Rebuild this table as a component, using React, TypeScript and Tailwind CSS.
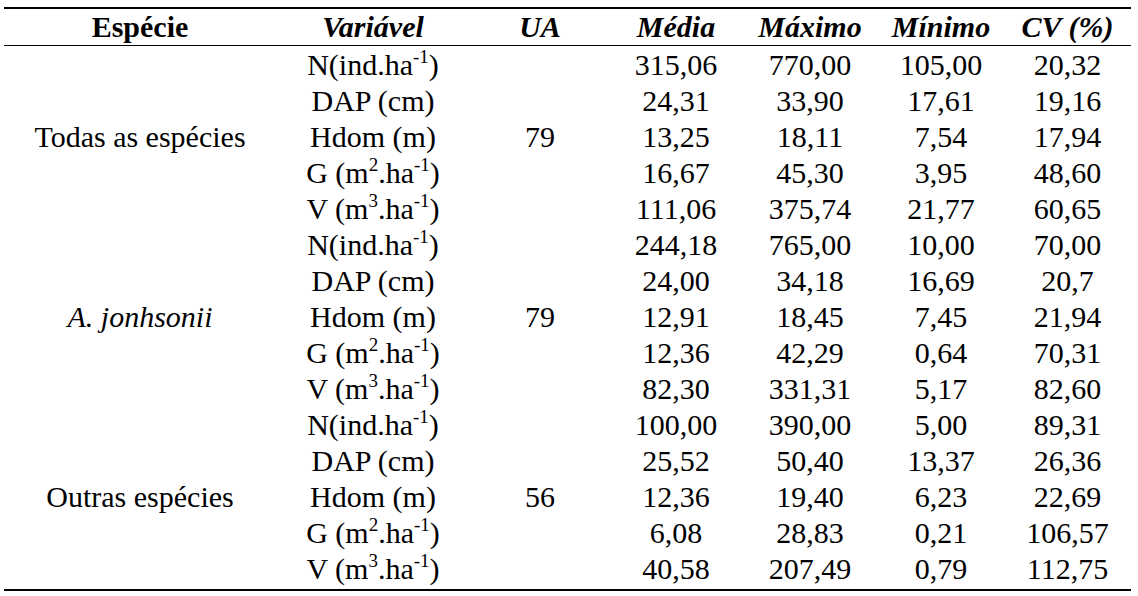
import React from "react";

type Row = {
  variavel: React.ReactNode;
  media: string;
  maximo: string;
  minimo: string;
  cv: string;
};

type Group = {
  especie: React.ReactNode;
  ua: string;
  rows: Row[];
};

const Sup = ({ children }: { children: React.ReactNode }) => (
  <sup className="relative -top-[0.45em] align-baseline text-[19px] leading-none">{children}</sup>
);

const N = (
  <>
    N(ind.ha<Sup>-1</Sup>)
  </>
);
const DAP = <>DAP (cm)</>;
const HDOM = <>Hdom (m)</>;
const G = (
  <>
    G (m<Sup>2</Sup>.ha<Sup>-1</Sup>)
  </>
);
const V = (
  <>
    V (m<Sup>3</Sup>.ha<Sup>-1</Sup>)
  </>
);

const groups: Group[] = [
  {
    especie: "Todas as espécies",
    ua: "79",
    rows: [
      { variavel: N, media: "315,06", maximo: "770,00", minimo: "105,00", cv: "20,32" },
      { variavel: DAP, media: "24,31", maximo: "33,90", minimo: "17,61", cv: "19,16" },
      { variavel: HDOM, media: "13,25", maximo: "18,11", minimo: "7,54", cv: "17,94" },
      { variavel: G, media: "16,67", maximo: "45,30", minimo: "3,95", cv: "48,60" },
      { variavel: V, media: "111,06", maximo: "375,74", minimo: "21,77", cv: "60,65" },
    ],
  },
  {
    especie: <i>A. jonhsonii</i>,
    ua: "79",
    rows: [
      { variavel: N, media: "244,18", maximo: "765,00", minimo: "10,00", cv: "70,00" },
      { variavel: DAP, media: "24,00", maximo: "34,18", minimo: "16,69", cv: "20,7" },
      { variavel: HDOM, media: "12,91", maximo: "18,45", minimo: "7,45", cv: "21,94" },
      { variavel: G, media: "12,36", maximo: "42,29", minimo: "0,64", cv: "70,31" },
      { variavel: V, media: "82,30", maximo: "331,31", minimo: "5,17", cv: "82,60" },
    ],
  },
  {
    especie: "Outras espécies",
    ua: "56",
    rows: [
      { variavel: N, media: "100,00", maximo: "390,00", minimo: "5,00", cv: "89,31" },
      { variavel: DAP, media: "25,52", maximo: "50,40", minimo: "13,37", cv: "26,36" },
      { variavel: HDOM, media: "12,36", maximo: "19,40", minimo: "6,23", cv: "22,69" },
      { variavel: G, media: "6,08", maximo: "28,83", minimo: "0,21", cv: "106,57" },
      { variavel: V, media: "40,58", maximo: "207,49", minimo: "0,79", cv: "112,75" },
    ],
  },
];

const cols = "grid grid-cols-[272px_194px_140px_132px_136px_126px_127px]";
const cell = "flex h-[36px] items-center justify-center whitespace-nowrap";

export default function App() {
  return (
    <div className="h-[596px] w-[1138px] bg-white pl-[4px] pt-[7px] font-['Liberation_Serif'] text-[30px] leading-[36px] text-black">
      <div className="w-[1127px]">
        <div className="h-[1.5px] bg-black" />
        <div className={`${cols} font-bold`}>
          <div className={cell}>Espécie</div>
          <div className={`${cell} italic`}>Variável</div>
          <div className={`${cell} italic`}>UA</div>
          <div className={`${cell} italic`}>Média</div>
          <div className={`${cell} italic`}>Máximo</div>
          <div className={`${cell} italic`}>Mínimo</div>
          <div className={`${cell} italic`}>CV (%)</div>
        </div>
        <div className="h-[1.5px] bg-black" />
        <div className="pt-[1px]">
          {groups.map((g, gi) => (
            <div key={gi} className={`${cols} grid-rows-[repeat(5,36px)]`}>
              <div className="row-span-5 flex items-center justify-center whitespace-nowrap">
                {g.especie}
              </div>
              {g.rows.map((r, ri) => (
                <React.Fragment key={ri}>
                  <div className={`${cell} col-start-2`}>{r.variavel}</div>
                  {ri === 0 && (
                    <div className="col-start-3 row-span-5 row-start-1 flex items-center justify-center">
                      {g.ua}
                    </div>
                  )}
                  <div className={`${cell} col-start-4`}>{r.media}</div>
                  <div className={cell}>{r.maximo}</div>
                  <div className={cell}>{r.minimo}</div>
                  <div className={cell}>{r.cv}</div>
                </React.Fragment>
              ))}
            </div>
          ))}
        </div>
        <div className="mt-[2px] h-[1.5px] bg-black" />
      </div>
    </div>
  );
}
